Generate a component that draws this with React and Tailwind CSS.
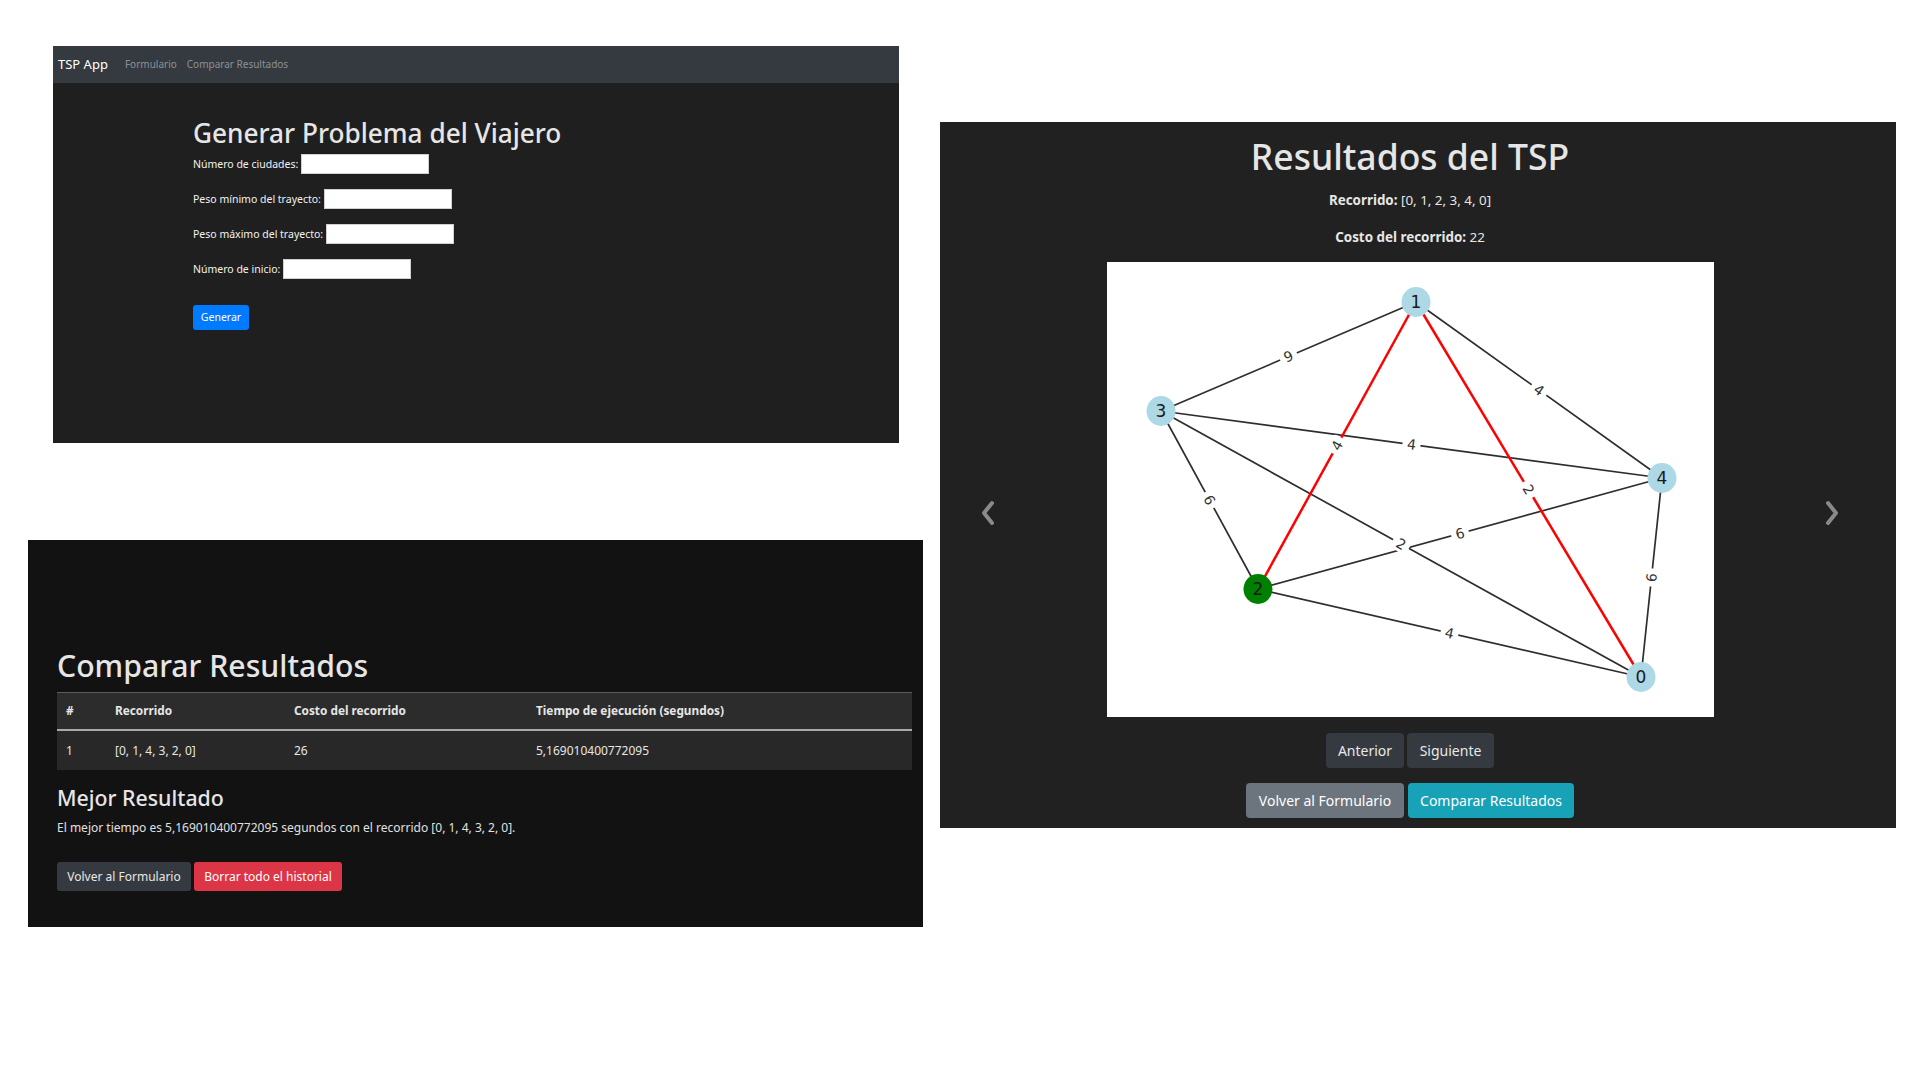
import React from "react";

const nodes = {
  0: { x: 534, y: 415, c: "#add8e6" },
  1: { x: 309, y: 40, c: "#add8e6" },
  2: { x: 151, y: 327, c: "#008000" },
  3: { x: 54, y: 149, c: "#add8e6" },
  4: { x: 555, y: 216, c: "#add8e6" },
};

const edges = [
  [3, 1, "9", false],
  [1, 4, "4", false],
  [3, 4, "4", false],
  [3, 2, "6", false],
  [3, 0, "2", false],
  [2, 4, "6", false],
  [2, 0, "4", false],
  [4, 0, "6", false],
  [1, 2, "4", true],
  [1, 0, "2", true],
];

function Graph() {
  return (
    <svg width="607" height="455" viewBox="0 0 607 455" className="block">
      <rect x="0" y="0" width="607" height="455" fill="#ffffff" />
      {edges.map(([a, b, , red], i) => (
        <line
          key={"e" + i}
          x1={nodes[a].x}
          y1={nodes[a].y}
          x2={nodes[b].x}
          y2={nodes[b].y}
          stroke={red ? "#ff0000" : "#2e2e2e"}
          strokeWidth={red ? 2.5 : 1.7}
        />
      ))}
      {Object.entries(nodes).map(([k, n]) => (
        <g key={"n" + k}>
          <ellipse cx={n.x} cy={n.y} rx="14.5" ry="15" fill={n.c} />
          <text
            x={n.x}
            y={n.y + 6}
            textAnchor="middle"
            fontFamily="'DejaVu Sans', sans-serif"
            fontSize="17"
            fill="#1a1a1a"
          >
            {k}
          </text>
        </g>
      ))}
      {edges.map(([a, b, w], i) => {
        const mx = (nodes[a].x + nodes[b].x) / 2;
        const my = (nodes[a].y + nodes[b].y) / 2;
        let ang = (Math.atan2(nodes[b].y - nodes[a].y, nodes[b].x - nodes[a].x) * 180) / Math.PI;
        if (ang > 90) ang -= 180;
        if (ang < -90) ang += 180;
        return (
          <g key={"l" + i} transform={`translate(${mx} ${my}) rotate(${ang})`}>
            <rect x="-9" y="-8" width="18" height="16" rx="3" fill="#ffffff" />
            <text
              x="0"
              y="5"
              textAnchor="middle"
              fontFamily="'DejaVu Sans', sans-serif"
              fontSize="14"
              fill="#333333"
            >
              {w}
            </text>
          </g>
        );
      })}
    </svg>
  );
}

function Chevron({ dir }) {
  return (
    <svg width="18" height="28" viewBox="0 0 18 28">
      {dir === "left" ? (
        <polyline points="13,4 5,14 13,24" fill="none" stroke="#8a8a8a" strokeWidth="4" strokeLinecap="round" strokeLinejoin="round" />
      ) : (
        <polyline points="5,4 13,14 5,24" fill="none" stroke="#8a8a8a" strokeWidth="4" strokeLinecap="round" strokeLinejoin="round" />
      )}
    </svg>
  );
}

function FormRow({ label }) {
  return (
    <div className="flex items-center h-[20px]">
      <span className="text-[10.5px] text-[#f2f2f2] leading-none">{label}</span>
      <div className="ml-[3px] w-[128px] h-[20px] bg-white border border-[#d0d0d0]" />
    </div>
  );
}

export default function App() {
  return (
    <div className="relative w-[1920px] h-[1080px] bg-white overflow-hidden font-['Noto_Sans',sans-serif]">
      {/* Panel 1: formulario */}
      <div className="absolute left-[53px] top-[46px] w-[846px] h-[397px] bg-[#1f1f1f] flex flex-col">
        <nav className="h-[37px] bg-[#343a40] flex items-center pl-[5px] shrink-0">
          <span className="text-[13px] text-white">TSP App</span>
          <span className="ml-[17px] text-[10px] text-[#8d9195]">Formulario</span>
          <span className="ml-[10px] text-[10px] text-[#8d9195]">Comparar Resultados</span>
        </nav>
        <div className="pl-[140px] pt-[34px] flex flex-col items-start">
          <h1 className="text-[26.2px] leading-[32px] text-[#e6e6e6] font-medium">Generar Problema del Viajero</h1>
          <div className="mt-[5px] flex flex-col gap-[15px]">
            <FormRow label="Número de ciudades:" />
            <FormRow label="Peso mínimo del trayecto:" />
            <FormRow label="Peso máximo del trayecto:" />
            <FormRow label="Número de inicio:" />
          </div>
          <button className="mt-[26px] w-[56px] h-[25px] bg-[#007bff] text-white text-[10.5px] rounded-[3px]">
            Generar
          </button>
        </div>
      </div>

      {/* Panel 2: comparar */}
      <div className="absolute left-[28px] top-[540px] w-[895px] h-[387px] bg-[#121212] pl-[29px] pt-[107px]">
        <h2 className="text-[30.2px] leading-[37px] text-[#e6e6e6] font-medium">Comparar Resultados</h2>
        <div className="mt-[8px] w-[855px] text-[#e6e6e6]">
          <div className="grid grid-cols-[49px_179px_242px_385px] h-[39px] items-center bg-[#2c2c2c] border-t border-[#5a5a5a] border-b-2 border-b-[#a9a9a9] text-[11.8px] font-bold">
            <span className="pl-[9px]">#</span>
            <span className="pl-[9px]">Recorrido</span>
            <span className="pl-[9px]">Costo del recorrido</span>
            <span className="pl-[9px]">Tiempo de ejecución (segundos)</span>
          </div>
          <div className="grid grid-cols-[49px_179px_242px_385px] h-[39px] items-center bg-[#282828] text-[12px]">
            <span className="pl-[9px]">1</span>
            <span className="pl-[9px]">[0, 1, 4, 3, 2, 0]</span>
            <span className="pl-[9px]">26</span>
            <span className="pl-[9px]">5,169010400772095</span>
          </div>
        </div>
        <h3 className="mt-[15px] text-[21.3px] leading-[26px] text-[#e6e6e6] font-medium">Mejor Resultado</h3>
        <p className="mt-[8px] text-[12px] leading-[17px] text-[#e0e0e0]">
          El mejor tiempo es 5,169010400772095 segundos con el recorrido [0, 1, 4, 3, 2, 0].
        </p>
        <div className="mt-[26px] flex gap-[3px]">
          <button className="w-[134px] h-[29px] bg-[#343a40] text-[#e8e8e8] text-[12px] rounded-[3px]">
            Volver al Formulario
          </button>
          <button className="w-[148px] h-[29px] bg-[#dc3545] text-white text-[12px] rounded-[3px]">
            Borrar todo el historial
          </button>
        </div>
      </div>

      {/* Panel 3: resultados */}
      <div className="absolute left-[940px] top-[122px] w-[956px] h-[706px] bg-[#212121]">
        <div className="flex flex-col items-center pr-[16px] pt-[13px]">
          <h1 className="text-[35.5px] leading-[42px] text-[#e6e6e6] font-medium">Resultados del TSP</h1>
          <p className="mt-[14px] text-[13.4px] leading-[18px] text-[#e6e6e6]">
            <span className="font-bold">Recorrido:</span> [0, 1, 2, 3, 4, 0]
          </p>
          <p className="mt-[19px] text-[13.4px] leading-[18px] text-[#e6e6e6]">
            <span className="font-bold">Costo del recorrido:</span> 22
          </p>
          <div className="mt-[16px]">
            <Graph />
          </div>
          <div className="mt-[16px] flex gap-[3px]">
            <button className="w-[78px] h-[35px] bg-[#343a40] text-[#e8e8e8] text-[14px] rounded-[4px]">Anterior</button>
            <button className="w-[87px] h-[35px] bg-[#343a40] text-[#e8e8e8] text-[14px] rounded-[4px]">Siguiente</button>
          </div>
          <div className="mt-[15px] flex gap-[4px]">
            <button className="w-[158px] h-[35px] bg-[#6c757d] text-white text-[14px] rounded-[4px]">Volver al Formulario</button>
            <button className="w-[166px] h-[35px] bg-[#17a2b8] text-white text-[14px] rounded-[4px]">Comparar Resultados</button>
          </div>
        </div>
        <div className="absolute left-[39px] top-[377px]">
          <Chevron dir="left" />
        </div>
        <div className="absolute left-[883px] top-[377px]">
          <Chevron dir="right" />
        </div>
      </div>
    </div>
  );
}
